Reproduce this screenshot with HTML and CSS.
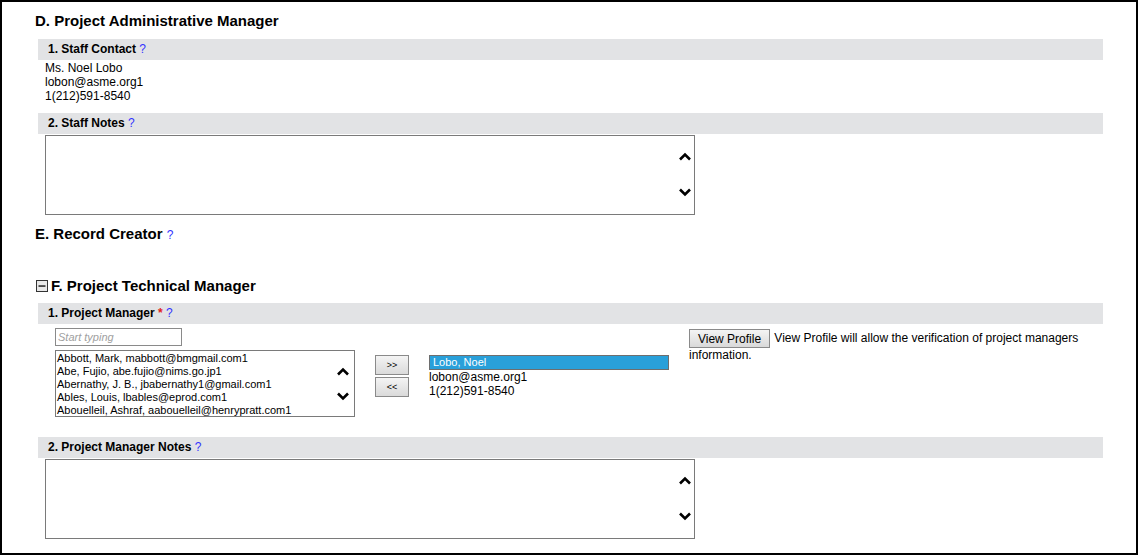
FILE: index.html
```html
<!DOCTYPE html>
<html lang="en">
<head>
    <meta charset="UTF-8">
    <title>Project Managers</title>
    <link rel="stylesheet" href="styles.css">
</head>
<body>
    <div class="page">
        <h2 class="section-title">D. Project Administrative Manager</h2>

        <div class="field">
            <div class="field-bar">1. Staff Contact <a class="help" href="#">?</a></div>
            <div class="contact">
                Ms. Noel Lobo<br>
                lobon@asme.org1<br>
                1(212)591-8540
            </div>
        </div>

        <div class="field">
            <div class="field-bar bar-gap">2. Staff Notes <a class="help" href="#">?</a></div>
            <div class="notes-box">
                <div class="scroll-arrows">
                    <svg width="12" height="9" viewBox="0 0 12 9"><path d="M1 7.5 L6 2.5 L11 7.5" fill="none" stroke="#000" stroke-width="2.6"/></svg>
                    <svg width="12" height="9" viewBox="0 0 12 9"><path d="M1 1.5 L6 6.5 L11 1.5" fill="none" stroke="#000" stroke-width="2.6"/></svg>
                </div>
            </div>
        </div>

        <h2 class="section-title title-e">E. Record Creator <a class="help" href="#">?</a></h2>

        <h2 class="section-title title-f">
            <svg class="toggle" width="12" height="12" viewBox="0 0 12 12"><rect x="0.5" y="0.5" width="11" height="11" fill="#e8e8e8" stroke="#333"/><rect x="2.5" y="5.3" width="7" height="1.5" fill="#222"/></svg>
            F. Project Technical Manager
        </h2>

        <div class="field">
            <div class="field-bar bar-pm">1. Project Manager <span class="required">*</span> <a class="help" href="#">?</a></div>
            <div class="pm-row">
                <div class="pm-search">
                    <input type="text" class="search-input" placeholder="Start typing">
                    <div class="listbox">
                        <div class="list-items">
                            <div>Abbott, Mark, mabbott@bmgmail.com1</div>
                            <div>Abe, Fujio, abe.fujio@nims.go.jp1</div>
                            <div>Abernathy, J. B., jbabernathy1@gmail.com1</div>
                            <div>Ables, Louis, lbables@eprod.com1</div>
                            <div>Abouelleil, Ashraf, aabouelleil@henrypratt.com1</div>
                        </div>
                        <div class="scroll-arrows list-arrows">
                            <svg width="12" height="9" viewBox="0 0 12 9"><path d="M1 7.5 L6 2.5 L11 7.5" fill="none" stroke="#000" stroke-width="2.6"/></svg>
                            <svg width="12" height="9" viewBox="0 0 12 9"><path d="M1 1.5 L6 6.5 L11 1.5" fill="none" stroke="#000" stroke-width="2.6"/></svg>
                        </div>
                    </div>
                </div>
                <div class="move-buttons">
                    <button class="move-btn">&gt;&gt;</button>
                    <button class="move-btn">&lt;&lt;</button>
                </div>
                <div class="selected">
                    <div class="selected-item">Lobo, Noel</div>
                    <div class="selected-info">lobon@asme.org1<br>1(212)591-8540</div>
                </div>
                <div class="profile">
                    <button class="profile-btn">View Profile</button>
                    <span class="profile-text">View Profile will allow the verification of project managers information.</span>
                </div>
            </div>
        </div>

        <div class="field">
            <div class="field-bar bar-notes">2. Project Manager Notes <a class="help" href="#">?</a></div>
            <div class="notes-box">
                <div class="scroll-arrows">
                    <svg width="12" height="9" viewBox="0 0 12 9"><path d="M1 7.5 L6 2.5 L11 7.5" fill="none" stroke="#000" stroke-width="2.6"/></svg>
                    <svg width="12" height="9" viewBox="0 0 12 9"><path d="M1 1.5 L6 6.5 L11 1.5" fill="none" stroke="#000" stroke-width="2.6"/></svg>
                </div>
            </div>
        </div>
    </div>
</body>
</html>
```

FILE: styles.css
```css
* {
    box-sizing: border-box;
}

body {
    margin: 0;
    font-family: "Liberation Sans", Arial, sans-serif;
    font-size: 12px;
    color: #000;
    background: #fff;
}

.page {
    width: 1138px;
    height: 555px;
    border: 2px solid #000;
    padding: 10px 33px 0 33px;
    overflow: hidden;
}

.section-title {
    margin: 0;
    font-size: 15px;
    line-height: 18px;
    font-weight: bold;
}

.title-e {
    margin-top: 10px;
}

.title-f {
    margin-top: 33px;
    display: flex;
    align-items: center;
}

.toggle {
    margin: 0 3px 0 1px;
}

.help {
    color: #3434ff;
    text-decoration: none;
    font-weight: normal;
    font-size: 12px;
}

.required {
    color: #e02020;
}

.field {
    margin-left: 3px;
}

.field-bar {
    margin-top: 9px;
    height: 21px;
    line-height: 21px;
    padding-left: 10px;
    background: #e2e3e5;
    font-weight: bold;
}

.bar-gap {
    margin-top: 10px;
}

.bar-pm {
    margin-top: 8px;
}

.bar-notes {
    margin-top: 20px;
}

.contact {
    margin-top: 1px;
    padding-left: 7px;
    line-height: 14px;
}

.notes-box {
    margin: 1px 0 0 7px;
    width: 650px;
    height: 80px;
    border: 1px solid #7a7a7a;
    display: flex;
    justify-content: flex-end;
}

.scroll-arrows {
    display: flex;
    flex-direction: column;
    justify-content: space-between;
    padding: 16px 3px 17px 0;
}

.scroll-arrows svg {
    display: block;
}

.pm-row {
    margin-top: 4px;
    padding-left: 17px;
    display: flex;
    gap: 20px;
    align-items: flex-start;
}

.pm-search {
    width: 300px;
}

.search-input {
    display: block;
    width: 127px;
    height: 18px;
    border: 1px solid #8a8a8a;
    padding: 0 2px;
    font-family: inherit;
    font-size: 11px;
}

.search-input::placeholder {
    color: #a0a0a0;
    font-style: italic;
}

.listbox {
    margin-top: 4px;
    height: 67px;
    border: 1px solid #7a7a7a;
    display: flex;
    justify-content: space-between;
}

.list-items {
    padding: 1px 0 0 1px;
    font-size: 11px;
    line-height: 13px;
    white-space: nowrap;
}

.list-arrows {
    padding: 16px 5px 15px 0;
}

.move-buttons {
    margin-top: 27px;
    display: flex;
    flex-direction: column;
    gap: 2px;
}

.move-btn {
    width: 34px;
    height: 20px;
    padding: 0;
    border: 1px solid #8a8a8a;
    background: linear-gradient(#f4f4f4, #dadada);
    font-family: inherit;
    font-size: 9px;
    color: #000;
}

.selected {
    margin-top: 27px;
    width: 240px;
}

.selected-item {
    height: 15px;
    line-height: 13px;
    padding-left: 3px;
    border: 1px solid #6e6e6e;
    background: #29a0da;
    color: #fff;
    font-size: 11px;
}

.selected-info {
    line-height: 14px;
}

.profile {
    width: 414px;
    padding-top: 1px;
    line-height: 14px;
}

.profile-btn {
    width: 81px;
    height: 19px;
    margin-right: 1px;
    padding: 0;
    border: 1px solid #8a8a8a;
    background: linear-gradient(#f4f4f4, #d9d9d9);
    font-family: inherit;
    font-size: 12px;
    color: #000;
    vertical-align: middle;
}
```
